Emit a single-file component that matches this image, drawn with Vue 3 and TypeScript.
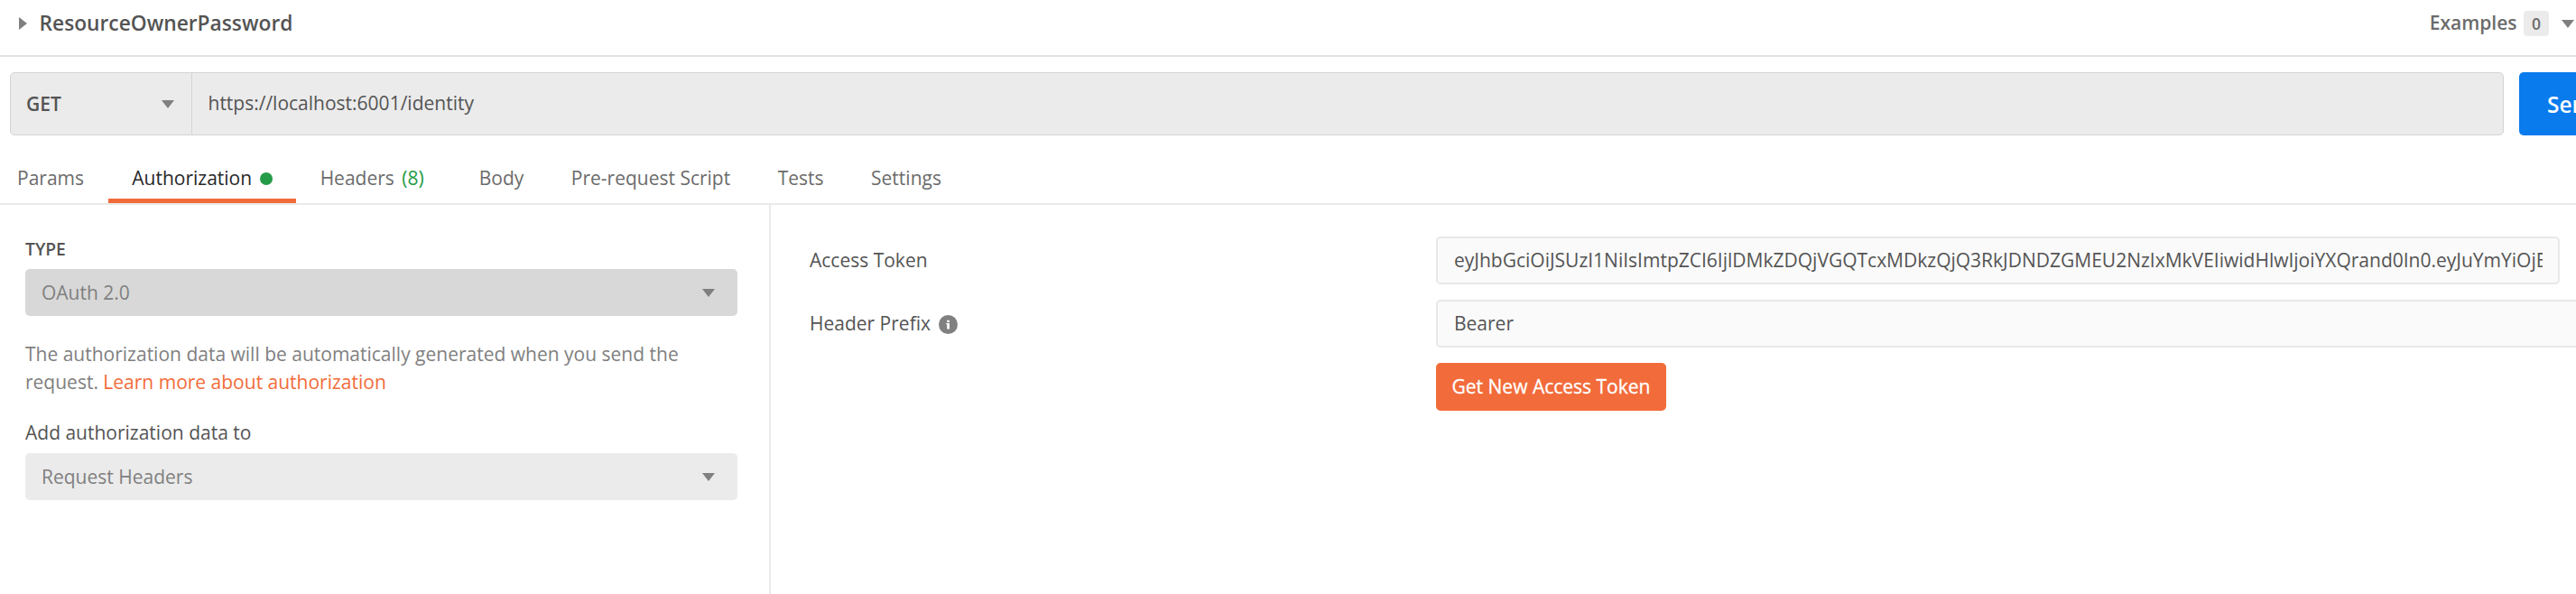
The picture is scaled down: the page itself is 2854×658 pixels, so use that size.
<script setup lang="ts">
import { ref } from 'vue'

interface Tab {
  label: string
  count?: number
  dot?: boolean
}

const tabs: Tab[] = [
  { label: 'Params' },
  { label: 'Authorization', dot: true },
  { label: 'Headers', count: 8 },
  { label: 'Body' },
  { label: 'Pre-request Script' },
  { label: 'Tests' },
  { label: 'Settings' },
]
const active = ref('Authorization')
const url = 'https://localhost:6001/identity'
const token =
  'eyJhbGciOiJSUzI1NiIsImtpZCI6IjlDMkZDQjVGQTcxMDkzQjQ3RkJDNDZGMEU2NzIxMkVEIiwidHlwIjoiYXQrand0In0.eyJuYmYiOjE'
</script>

<template>
  <div class="page">
    <header class="top">
      <svg class="expand" width="9" height="14" viewBox="0 0 9 14"><path d="M0 0L9 7L0 14Z" fill="#808080" /></svg>
      <h1 class="title">ResourceOwnerPassword</h1>
      <span class="examples">Examples</span>
      <span class="badge">0</span>
      <svg class="caret" width="14" height="9" viewBox="0 0 14 9"><path d="M0 0H14L7 9Z" fill="#808080" /></svg>
    </header>

    <div class="request">
      <div class="bar">
        <div class="method">
          <span>GET</span>
          <svg class="caret" width="14" height="9" viewBox="0 0 14 9"><path d="M0 0H14L7 9Z" fill="#808080" /></svg>
        </div>
        <div class="url">{{ url }}</div>
      </div>
      <button class="send">Send</button>
    </div>

    <nav class="tabs">
      <div
        v-for="tab in tabs"
        :key="tab.label"
        class="tab"
        :class="{ active: tab.label === active }"
        @click="active = tab.label"
      >
        <span>{{ tab.label }}</span>
        <span v-if="tab.count" class="count">({{ tab.count }})</span>
        <i v-if="tab.dot" class="dot"></i>
      </div>
    </nav>

    <main class="content">
      <section class="left">
        <div class="type-label">TYPE</div>
        <div class="select dark">
          <span>OAuth 2.0</span>
          <svg class="caret" width="14" height="9" viewBox="0 0 14 9"><path d="M0 0H14L7 9Z" fill="#808080" /></svg>
        </div>
        <p class="help">
          The authorization data will be automatically generated when you send the request.
          <a class="link">Learn more about authorization</a>
        </p>
        <div class="add-label">Add authorization data to</div>
        <div class="select">
          <span>Request Headers</span>
          <svg class="caret" width="14" height="9" viewBox="0 0 14 9"><path d="M0 0H14L7 9Z" fill="#808080" /></svg>
        </div>
      </section>

      <section class="right">
        <div class="row">
          <div class="label">Access Token</div>
          <div class="input token"><div class="clip">{{ token }}</div></div>
        </div>
        <div class="row">
          <div class="label">
            Header Prefix
            <svg class="info" width="21" height="21" viewBox="0 0 21 21">
              <circle cx="10.5" cy="10.5" r="10.5" fill="#808080" />
              <path d="M9.2 5.8h2.8v2.2h-2.8zM8.3 9h3.7v6.6h-2.8v-5.4h-.9z" fill="#fff" />
            </svg>
          </div>
          <div class="input prefix">Bearer</div>
        </div>
        <div class="row">
          <div class="label"></div>
          <button class="get">Get New Access Token</button>
        </div>
      </section>
    </main>
  </div>
</template>

<style>
body {
  margin: 0;
  background: #fff;
}
</style>

<style scoped>
.page {
  box-sizing: border-box;
  width: 2854px;
  height: 658px;
  overflow: hidden;
  display: flex;
  flex-direction: column;
  background: #fff;
  color: #545454;
  font-family: 'Open Sans', sans-serif;
  font-size: 21px;
}
.page * {
  box-sizing: border-box;
}
button {
  border: 0;
  padding: 0;
  font-family: inherit;
  color: #fff;
  border-radius: 5px;
  white-space: nowrap;
}
svg {
  flex: none;
  display: block;
}
.caret {
  margin-top: 1px;
}
.top {
  height: 63px;
  padding: 0 2px 9px 21px;
  border-bottom: 2px solid #e2e2e2;
  display: flex;
  align-items: center;
  flex: none;
}
.title {
  margin: 0 auto 0 13.5px;
  font-size: 22.75px;
  font-weight: 600;
  line-height: 32px;
}
.examples {
  margin-bottom: 2px;
  font-weight: 600;
  color: #6b6b6b;
}
.badge {
  margin: 0 14px 0 7.5px;
  width: 28px;
  height: 28px;
  border-radius: 4px;
  background: #ebebeb;
  color: #6b6b6b;
  font-size: 17.5px;
  font-weight: 600;
  line-height: 28px;
  text-align: center;
}
.request {
  display: flex;
  gap: 17px;
  height: 70px;
  margin: 17px 0 0 11px;
  flex: none;
}
.bar {
  width: 2763px;
  flex: none;
  display: flex;
  border: 1px solid #d4d4d4;
  border-radius: 5px;
  background: #ebebeb;
}
.method {
  width: 201px;
  padding: 0 19px 0 17px;
  border-right: 1px solid #d4d4d4;
  display: flex;
  align-items: center;
  justify-content: space-between;
  font-weight: 600;
}
.url {
  padding-left: 17.5px;
  line-height: 67px;
}
.send {
  width: 120px;
  padding: 1px 0 0 31px;
  flex: none;
  background: #097bed;
  font-size: 24.5px;
  font-weight: 600;
  text-align: left;
}
.tabs {
  height: 77px;
  padding: 22px 0 0;
  border-bottom: 2px solid #eaeaea;
  display: flex;
  flex: none;
}
.tab {
  height: 53px;
  padding: 2px 26.25px 0;
  display: flex;
  align-items: center;
  color: #6b6b6b;
  border-bottom: 5px solid transparent;
}
.tab:first-child {
  padding: 2px 27px 0 19px;
}
.tab.active {
  color: #282828;
  border-bottom-color: #f26b3a;
}
.count {
  margin: 0 8.5px;
  color: #249c47;
}
.dot {
  width: 14px;
  height: 14px;
  margin: 1px 0 0 9px;
  border-radius: 50%;
  background: #249c47;
}
.content {
  flex: 1;
  display: flex;
}
.left {
  width: 854px;
  flex: none;
  padding: 36px 35px 0 28px;
  border-right: 2px solid #eaeaea;
}
.type-label {
  height: 35px;
  line-height: 25px;
  font-size: 19.25px;
  font-weight: 600;
}
.select {
  height: 52px;
  padding: 0 25px 0 18px;
  border-radius: 5px;
  background: #ebebeb;
  color: #808080;
  display: flex;
  align-items: center;
  justify-content: space-between;
}
.select.dark {
  background: #d8d8d8;
}
.help {
  width: 740px;
  height: 62px;
  margin: 27px 0 0;
  color: #808080;
  line-height: 31px;
}
.link {
  color: #f26b3a;
}
.add-label {
  margin: 25px 0 7px;
  height: 31px;
  line-height: 31px;
}
.right {
  flex: 1;
  padding: 35px 0 0 43px;
}
.row {
  display: flex;
  height: 53px;
  margin-bottom: 17px;
}
.label {
  width: 694px;
  padding-bottom: 1px;
  flex: none;
  display: flex;
  align-items: center;
}
.info {
  margin: 3px 0 0 9px;
}
.input {
  flex: none;
  border: 2px solid #e8e8e8;
  border-radius: 5px;
  background: #fafafa;
  padding: 0 17px 0 18px;
  line-height: 49px;
}
.token {
  width: 1245px;
}
.clip {
  overflow: hidden;
  white-space: nowrap;
}
.prefix {
  width: 1290px;
}
.get {
  width: 255px;
  height: 53px;
  padding-bottom: 1px;
  background: #f26b3a;
  font-size: 21px;
  -webkit-text-stroke: 0.3px #fff;
}
</style>
